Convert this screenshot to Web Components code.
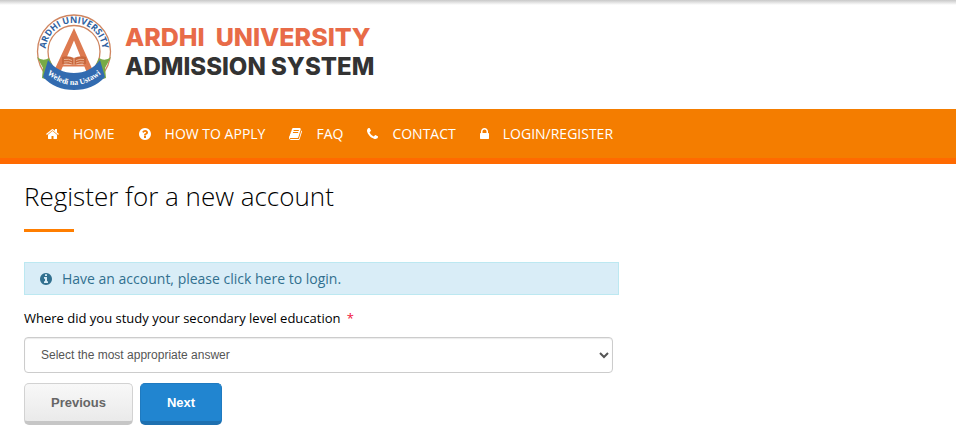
<!DOCTYPE html>
<html lang="en">
<head>
<meta charset="utf-8">
<title>Ardhi University Admission System</title>
<style>
body {
  margin: 0;
  background: #fff;
  color: #000;
  font-family: "Open Sans", "Liberation Sans", sans-serif;
  font-size: 13px;
  line-height: 20px;
}
</style>
</head>
<body>
<site-header></site-header>
<site-nav>
  <nav-item icon="home" href="#home">HOME</nav-item>
  <nav-item icon="question" href="#apply">HOW TO APPLY</nav-item>
  <nav-item icon="book" href="#faq">FAQ</nav-item>
  <nav-item icon="phone" href="#contact">CONTACT</nav-item>
  <nav-item icon="lock" href="#login">LOGIN/REGISTER</nav-item>
</site-nav>
<page-column>
  <page-title>Register for a new account</page-title>
  <info-alert href="#login">Have an account, please click here to login.</info-alert>
  <register-form></register-form>
</page-column>

<script>
// icon shapes, [left edge, width, path], all on a 1792 unit grid
const ICONS = {
  home: [64, 1664, 'M1472 992v480q0 26-19 45t-45 19h-384v-384h-256v384h-384q-26 0-45-19t-19-45v-480q0-1 .5-3t.5-3l575-474 575 474q1 2 1 6zm223-69l-62 74q-8 9-21 11h-3q-13 0-21-7l-692-577-692 577q-12 8-24 7-13-2-21-11l-62-74q-8-10-7-23.5t11-21.5l719-599q32-26 76-26t76 26l244 204v-195q0-14 9-23t23-9h192q14 0 23 9t9 23v408l219 182q10 8 11 21.5t-7 23.5z'],
  question: [128, 1536, 'M1024 1376v-192q0-14-9-23t-23-9h-192q-14 0-23 9t-9 23v192q0 14 9 23t23 9h192q14 0 23-9t9-23zm256-672q0-88-55.5-163t-138.5-116-170-41q-243 0-371 213-15 24 8 42l132 100q7 6 19 6 16 0 25-12 53-68 86-92 34-24 86-24 48 0 85.5 26t37.5 59q0 38-20 61t-68 45q-63 28-115.5 86.5t-52.5 125.5v36q0 14 9 23t23 9h192q14 0 23-9t9-23q0-19 21.5-49.5t54.5-49.5q32-18 49-28.5t46-35 44.5-48 28-60.5 12.5-81zm384 192q0 209-103 385.5t-279.5 279.5-385.5 103-385.5-103-279.5-279.5-103-385.5 103-385.5 279.5-279.5 385.5-103 385.5 103 279.5 279.5 103 385.5z'],
  book: [64, 1664, 'M1703 478q40 57 18 129l-275 906q-19 64-76.5 107.5t-122.5 43.5h-923q-77 0-148.5-53.5t-99.5-131.5q-24-67-2-127 0-4 3-27t4-37q1-8-3-21.5t-3-19.5q2-11 8-21t16.5-23.5 16.5-23.5q23-38 45-91.5t30-91.5q3-10 .5-30t-.5-28q3-11 17-28t17-23q21-36 42-92t25-90q1-9-2.5-32t.5-28q4-13 22-30.5t22-22.5q19-26 42.5-84.5t27.5-96.5q1-8-3-25.5t-2-26.5q2-8 9-18t18-23 17-21q8-12 16.5-30.5t15-35 16-36 19.5-32 26.5-23.5 36-11.5 47.5 5.5l-1 3q38-9 51-9h761q74 0 114 56t18 130l-274 906q-36 119-71.5 153.5t-128.5 34.5h-869q-27 0-38 15-11 16-1 43 24 70 144 70h923q29 0 56-15.5t35-41.5l300-987q7-22 5-57 38 15 59 43zm-1064 2q-4 13 2 22.5t20 9.5h608q13 0 25.5-9.5t16.5-22.5l21-64q4-13-2-22.5t-20-9.5h-608q-13 0-25.5 9.5t-16.5 22.5zm-83 256q-4 13 2 22.5t20 9.5h608q13 0 25.5-9.5t16.5-22.5l21-64q4-13-2-22.5t-20-9.5h-608q-13 0-25.5 9.5t-16.5 22.5z'],
  phone: [192, 1408, 'M1600 1240q0 27-10 70.5t-21 68.5q-21 50-122 106-94 51-186 51-27 0-53-3.5t-57.5-12.5-47-14.5-55.5-20.5-49-18q-98-35-175-83-127-79-264-216t-216-264q-48-77-83-175-3-9-18-49t-20.5-55.5-14.5-47-12.5-57.5-3.5-53q0-92 51-186 56-101 106-122 25-11 68.5-21t70.5-10q14 0 21 3 18 6 53 76 11 19 30 54t35 63.5 31 53.5q3 4 17.5 25t21.5 35.5 7 28.5q0 20-28.5 50t-62 55-62 53-28.5 46q0 9 5 22.5t8.5 20.5 14 24 11.5 19q76 137 174 235t235 174q2 1 19 11.5t24 14 20.5 8.5 22.5 5q18 0 46-28.5t53-62 55-62 50-28.5q14 0 28.5 7t35.5 21.5 25 17.5q25 15 53.5 31t63.5 35 54 30q70 35 76 53 3 7 3 21z'],
  lock: [320, 1152, 'M640 768h512v-192q0-106-75-181t-181-75-181 75-75 181v192zm832 96v576q0 40-28 68t-68 28h-960q-40 0-68-28t-28-68v-576q0-40 28-68t68-28h32v-192q0-184 132-316t316-132 316 132 132 316v192h32q40 0 68 28t28 68z'],
  info: [128, 1536, 'M1152 1376v-160q0-14-9-23t-23-9h-96v-512q0-14-9-23t-23-9h-320q-14 0-23 9t-9 23v160q0 14 9 23t23 9h96v320h-96q-14 0-23 9t-9 23v160q0 14 9 23t23 9h448q14 0 23-9t9-23zm-128-896v-160q0-14-9-23t-23-9h-192q-14 0-23 9t-9 23v160q0 14 9 23t23 9h192q14 0 23-9t9-23zm640 416q0 209-103 385.5t-279.5 279.5-385.5 103-385.5-103-279.5-279.5-103-385.5 103-385.5 279.5-279.5 385.5-103 385.5 103 279.5 279.5 103 385.5z']
};

class UiIcon extends HTMLElement {
  connectedCallback() {
    const [left, width, path] = ICONS[this.getAttribute('name')];
    this.attachShadow({mode: 'open'}).innerHTML = `
    <style>
    :host {
      display: block;
      flex: none;
    }

    svg {
      display: block;
      fill: currentColor;
      height: 14px;
    }
    </style>
    <svg viewBox="${left} 0 ${width} 1792" width="${width / 128}" aria-hidden="true"><path d="${path}"/></svg>
    `;
  }
}

class UniversityLogo extends HTMLElement {
  constructor() {
    super();
    this.attachShadow({mode: 'open'}).innerHTML = `
    <style>
    :host {
      display: block;
      flex: none;
    }

    svg {
      display: block;
      height: 78px;
      width: 78px;
    }

    text {
      font-family: "Open Sans", "Liberation Sans", sans-serif;
      font-weight: bold;
      text-anchor: middle;
    }

    .motto {
      font-family: "Liberation Serif", serif;
    }
    </style>
    <svg viewBox="0 0 78 78" role="img" aria-label="Ardhi University crest">
      <circle cx="39" cy="38.500" r="36.500" fill="#fff" stroke="#cf8560" stroke-width="1.300"/>
      <circle cx="39" cy="38.500" r="26" fill="none" stroke="#cf8560" stroke-width="1.300"/>
      <path d="M39 15 59 60H52L39 27.500 25 60H18Z" fill="#dd7a50"/>
      <path d="M25 52.500h28" stroke="#dd7a50" stroke-width="2"/>
      <path d="M27 44q6-2 12 1 6-3 12-1v7q-6-1-12 1-6-2-12-1z" fill="#c9683d"/>
      <path d="M39 45v7M29 46.500q5-1 8 1M41 47.500q4-2 8-1M29 49q5-1 8 1M41 50q4-2 8-1" fill="none" stroke="#f3c5aa" stroke-width=".8"/>
      <path d="M2 44Q8 49 14 45L20 58 10 66 7 65 8 55Z" fill="#78aa46"/>
      <path d="M76 44Q70 49 64 45L58 58 68 66 71 65 70 55Z" fill="#78aa46"/>
      <path d="M13 47Q23 60 39 60 55 60 65 47L70 64Q58 77 39 77 20 77 8 64Z" fill="#326bb0"/>
      <path id="top" d="M12.500 49 A28.500 28.500 0 1 1 65.500 49" fill="none"/>
      <text font-size="9" fill="#2f619f"><textPath href="#top" startOffset="50%">ARDHI UNIVERSITY</textPath></text>
      <path id="ribbon" d="M11 60 Q39 84 67 60" fill="none"/>
      <text class="motto" font-size="8" fill="#fff"><textPath href="#ribbon" startOffset="50%">Weledi na Ustawi</textPath></text>
    </svg>
    `;
  }
}

class SiteHeader extends HTMLElement {
  constructor() {
    super();
    this.attachShadow({mode: 'open'}).innerHTML = `
    <style>
    :host {
      background: linear-gradient(#c8c8c8, #fff 5px);
      display: block;
    }

    header {
      align-items: center;
      display: flex;
      gap: 12px;
      padding: 13px 35px 18px;
    }

    h1 {
      color: #333;
      font: 800 24px/29px Inter, "Liberation Sans", sans-serif;
      margin: 0;
    }

    span {
      display: block;
      white-space: pre;
    }

    .name {
      color: #e86b48;
      font-size: 25px;
    }
    </style>
    <header>
      <university-logo></university-logo>
      <h1><span class="name">ARDHI  UNIVERSITY</span><span>ADMISSION SYSTEM</span></h1>
    </header>
    `;
  }
}

class SiteNav extends HTMLElement {
  constructor() {
    super();
    this.attachShadow({mode: 'open'}).innerHTML = `
    <style>
    :host {
      background: #f47d00;
      border-bottom: 6px solid #ff6a00;
      display: block;
    }

    nav {
      display: flex;
      flex-wrap: wrap;
      gap: 0 24px;
      padding: 0 46px;
    }
    </style>
    <nav><slot></slot></nav>
    `;
  }
}

class NavItem extends HTMLElement {
  connectedCallback() {
    this.attachShadow({mode: 'open'}).innerHTML = `
    <style>
    :host {
      display: block;
    }

    a {
      align-items: center;
      color: #fff;
      display: flex;
      font-size: 14px;
      gap: 14px;
      line-height: 49px;
      text-decoration: none;
    }
    </style>
    <a href="${this.getAttribute('href')}"><ui-icon name="${this.getAttribute('icon')}"></ui-icon><slot></slot></a>
    `;
  }
}

class PageColumn extends HTMLElement {
  constructor() {
    super();
    this.attachShadow({mode: 'open'}).innerHTML = `
    <style>
    :host {
      display: block;
      padding: 0 9px;
    }

    main {
      box-sizing: border-box;
      padding: 15px 15px 0;
      width: calc(100% * 2 / 3);
    }
    </style>
    <main><slot></slot></main>
    `;
  }
}

class PageTitle extends HTMLElement {
  constructor() {
    super();
    this.attachShadow({mode: 'open'}).innerHTML = `
    <style>
    :host {
      display: block;
      margin-bottom: 30px;
    }

    h2 {
      font-size: 26px;
      font-weight: 300;
      line-height: 34px;
      margin: 0;
    }

    h2::after {
      background: #ff7e00;
      content: "";
      display: block;
      height: 3px;
      margin-top: 16px;
      width: 50px;
    }
    </style>
    <h2><slot></slot></h2>
    `;
  }
}

class InfoAlert extends HTMLElement {
  connectedCallback() {
    this.attachShadow({mode: 'open'}).innerHTML = `
    <style>
    :host {
      background: #d9edf7;
      border: 1px solid #bce8f1;
      display: block;
      margin-bottom: 13px;
      padding: 0 15px;
    }

    a {
      align-items: center;
      color: #31708f;
      display: flex;
      font-size: 14px;
      gap: 10px;
      line-height: 31px;
      text-decoration: none;
    }
    </style>
    <a href="${this.getAttribute('href')}"><ui-icon name="info"></ui-icon><slot></slot></a>
    `;
  }
}

class RegisterForm extends HTMLElement {
  constructor() {
    super();
    this.attachShadow({mode: 'open'}).innerHTML = `
    <style>
    :host {
      display: block;
    }

    label {
      display: block;
      margin-bottom: 9px;
    }

    .required {
      color: #f0143c;
      margin-left: 3px;
    }

    .field {
      display: flex;
      margin-bottom: 10px;
      padding-right: 6px;
    }

    select {
      background: #fff;
      border: 1px solid #ccc;
      border-radius: 4px;
      box-shadow: inset 0 1px 1px rgb(0,0,0,0.08);
      color: #555;
      flex: 1;
      font: 12px "Liberation Sans", sans-serif;
      height: 36px;
      min-width: 0;
      padding: 0 0 0 12px;
    }

    .actions {
      display: flex;
      gap: 7px;
    }

    button {
      border: 1px solid #1f7ac0;
      border-bottom: 4px solid #1e70b0;
      border-radius: 5px;
      background: #2185d0;
      color: #fff;
      cursor: pointer;
      font: bold 13px/37px "Liberation Sans", sans-serif;
      padding: 0 26px;
    }

    .previous {
      background: linear-gradient(#f8f8f8, #eaeaea);
      border-color: #d2d2d2 #d2d2d2 #c6c6c6;
      color: #666;
    }
    </style>
    <form>
      <label for="level">Where did you study your secondary level education <span class="required">*</span></label>
      <div class="field">
        <select id="level"><option>Select the most appropriate answer</option></select>
      </div>
      <div class="actions">
        <button type="button" class="previous">Previous</button>
        <button type="button">Next</button>
      </div>
    </form>
    `;
  }
}

customElements.define('ui-icon', UiIcon);
customElements.define('university-logo', UniversityLogo);
customElements.define('site-header', SiteHeader);
customElements.define('site-nav', SiteNav);
customElements.define('nav-item', NavItem);
customElements.define('page-column', PageColumn);
customElements.define('page-title', PageTitle);
customElements.define('info-alert', InfoAlert);
customElements.define('register-form', RegisterForm);
</script>
</body>
</html>
